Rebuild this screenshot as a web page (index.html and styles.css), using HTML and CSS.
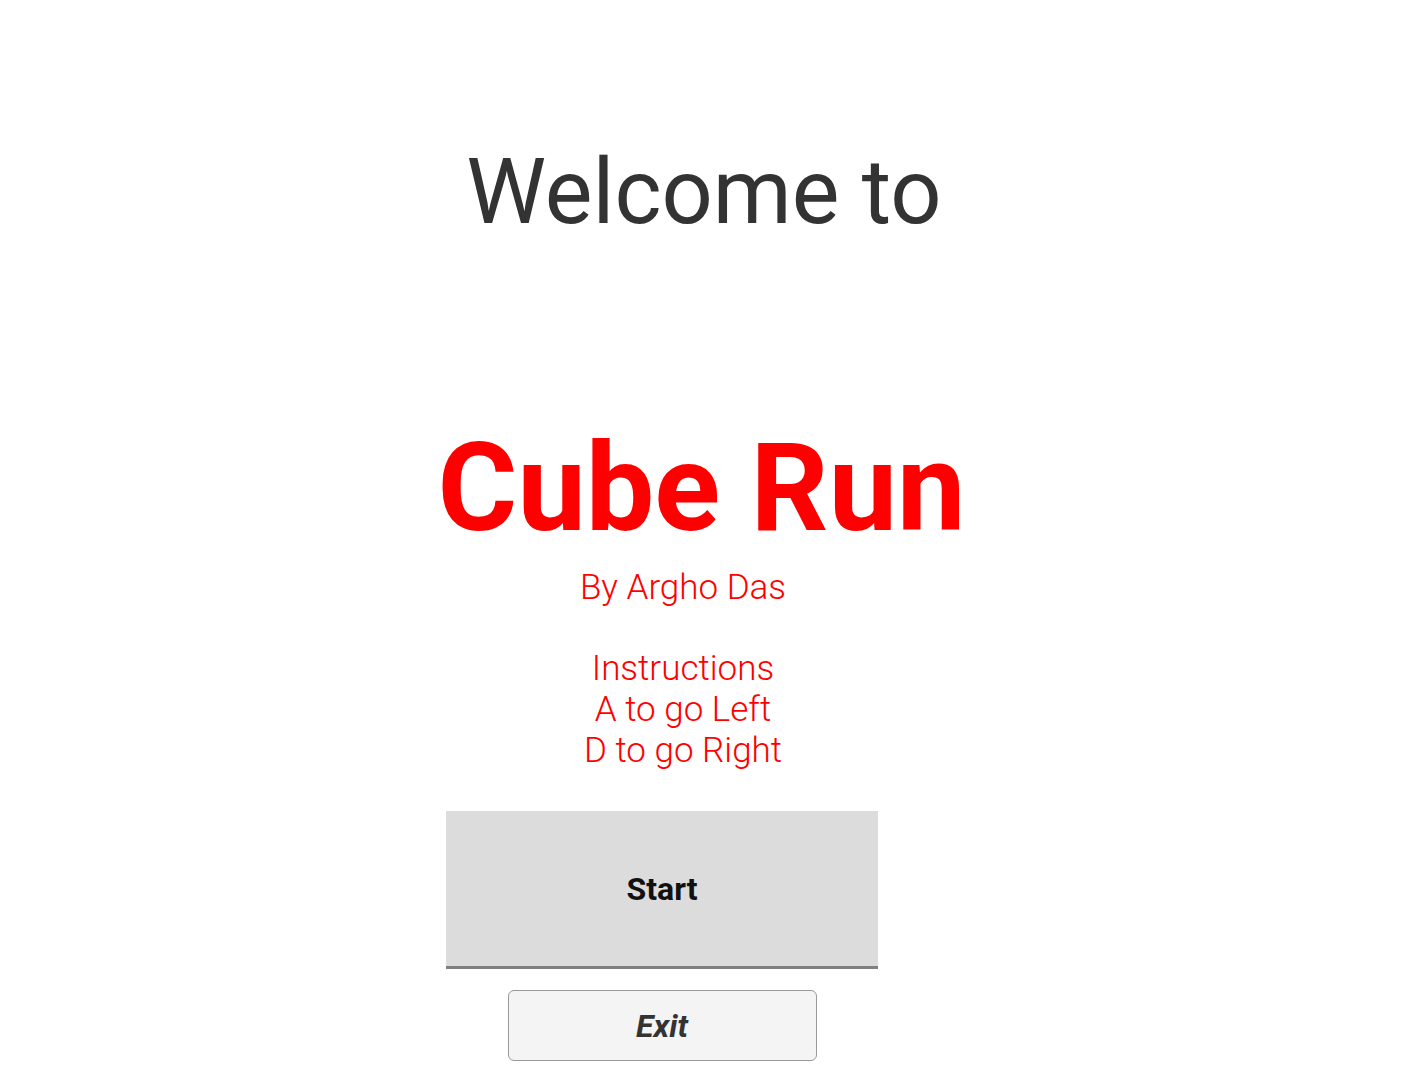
FILE: index.html
```html
<!DOCTYPE html>
<html>
<head>
<meta charset="utf-8">
<link rel="stylesheet" href="styles.css">
</head>
<body>
<main class="screen">
  <h1 class="welcome">Welcome to</h1>
  <h2 class="title">Cube Run</h2>
  <div class="info">
    <p class="byline">By Argho Das</p>
    <p class="instructions">Instructions<br>A to go Left<br>D to go Right</p>
  </div>
  <div class="buttons">
    <button class="start">Start</button>
    <button class="exit">Exit</button>
  </div>
</main>
</body>
</html>
```

FILE: styles.css
```css
html, body {
  margin: 0;
  padding: 0;
  background: #ffffff;
}
.screen {
  display: flex;
  flex-direction: column;
  align-items: center;
  font-family: Roboto, "Liberation Sans", sans-serif;
  padding-top: 140px;
}
.welcome {
  margin: 0;
  font-size: 90px;
  font-weight: 400;
  line-height: 106px;
  color: #333333;
  margin-left: 2px;
}
.title {
  margin: 173px 3px 0 0;
  font-size: 122px;
  font-weight: 700;
  line-height: 140px;
  color: #ff0000;
}
.info {
  margin: 8px 40px 0 0;
  text-align: center;
  color: #ff0000;
  font-size: 35px;
  font-weight: 300;
  line-height: 41px;
}
.byline {
  margin: 0;
}
.instructions {
  margin: 0;
  padding-top: 40px;
}
.buttons {
  display: flex;
  flex-direction: column;
  align-items: center;
  margin: 40px 82px 0 0;
}
.start {
  width: 432px;
  height: 158px;
  background: #dcdcdc;
  border: none;
  border-bottom: 3px solid #808080;
  font-family: Roboto, "Liberation Sans", sans-serif;
  font-size: 32px;
  font-weight: 700;
  color: #111111;
  padding: 0;
}
.exit {
  margin-top: 21px;
  width: 309px;
  height: 71px;
  background: #f4f4f4;
  border: 1px solid #999999;
  border-radius: 6px;
  font-family: Roboto, "Liberation Sans", sans-serif;
  font-size: 32px;
  font-weight: 700;
  font-style: italic;
  color: #333333;
  padding: 0;
}
```
